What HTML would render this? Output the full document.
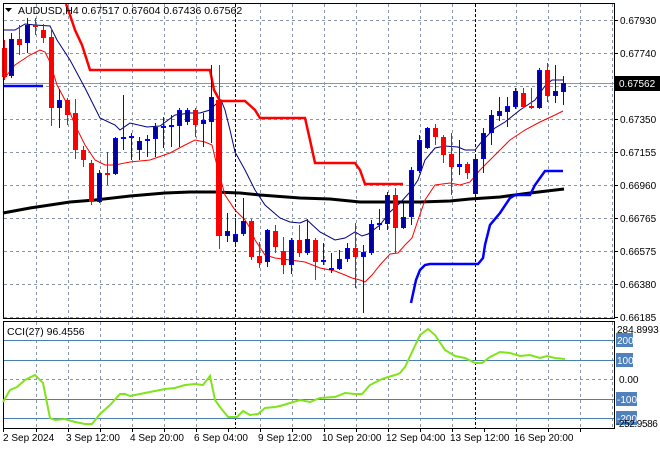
<!DOCTYPE html>
<html><head><meta charset="utf-8"><style>
html,body{margin:0;padding:0;background:#fff;}
svg{display:block;font-family:"Liberation Sans",sans-serif;}
</style></head><body>
<svg width="660" height="450" viewBox="0 0 660 450" xmlns="http://www.w3.org/2000/svg">
<rect width="660" height="450" fill="#fff"/>
<g stroke="#8a96a3" stroke-width="1" stroke-dasharray="3,3" shape-rendering="crispEdges">
<path d="M36.5 4V318M68.5 4V318M100.5 4V318M132.5 4V318M164.5 4V318M196.5 4V318M260.5 4V318M292.5 4V318M324.5 4V318M356.5 4V318M388.5 4V318M420.5 4V318M452.5 4V318M516.5 4V318M548.5 4V318M580.5 4V318M612.5 4V318"/>
<path d="M36.5 322V428M68.5 322V428M100.5 322V428M132.5 322V428M164.5 322V428M196.5 322V428M260.5 322V428M292.5 322V428M324.5 322V428M356.5 322V428M388.5 322V428M420.5 322V428M452.5 322V428M516.5 322V428M548.5 322V428M580.5 322V428M612.5 322V428"/>
<path d="M4 20.5H614M4 53.5H614M4 86.5H614M4 119.5H614M4 152.5H614M4 185.5H614M4 218.5H614M4 251.5H614M4 284.5H614M4 317.5H614M4 379.5H614"/>
</g>
<g stroke="#000" stroke-width="1" stroke-dasharray="3,2" shape-rendering="crispEdges">
<path d="M235.5 4V318M475.5 4V318M235.5 322V428M475.5 322V428"/>
</g>
<path d="M4 83.5H614" stroke="#8a96a3" stroke-width="1"/>
<polyline fill="none" stroke="#000" stroke-width="3" points="3,213 30,208 70,202 95,200 130,196 165,193 190,192 215,192 240,193 260,195 300,198 330,199 360,202 380,202 420,202 450,201 470,199 500,197 530,193 564,189"/>
<polyline fill="none" stroke="#f00" stroke-width="2.5" points="66,4 70,15 75,30 82,45 90,70 210,70 214,90 220,101 245,101 255,110 260,118 305,118 310,140 315,163 355,163 360,170 365,184 403,184"/>
<polyline fill="none" stroke="#00f" stroke-width="2.5" points="3,86 43,86"/>
<polyline fill="none" stroke="#00f" stroke-width="2.5" points="411,303 416,280 420,270 425,265 430,264 478,264 483,258 485,245 490,225 500,213 510,198 515,195 530,195 535,185 540,178 545,171 563,171"/>
<polyline fill="none" stroke="#000080" stroke-width="1" points="3,30 15,30 25,24 35,25 50,26 57,40 70,60 85,88 100,118 115,125 120,130 130,123 147,127 160,126 175,115 190,113 200,113 210,110 215,105 221,100 225,110 230,130 235,152 245,170 255,190 265,205 280,218 290,222 300,223 307,220 320,232 335,240 345,238 355,232 362,236 368,234 380,225 390,212 400,203 410,192 418,180 425,160 435,148 445,146 458,147 465,150 475,150 483,140 495,128 505,122 520,110 535,100 545,86 552,80 563,80"/>
<polyline fill="none" stroke="#f00" stroke-width="1" points="3,80 15,65 30,55 40,50 45,52 50,62 57,85 65,100 75,125 85,145 95,160 105,165 115,165 130,162 150,160 170,153 185,145 195,140 205,142 212,145 218,170 225,195 235,210 245,220 250,228 255,240 265,255 275,258 290,260 305,262 320,268 335,271 345,275 352,278 360,280 365,282 372,275 380,265 390,254 398,253 405,245 412,238 418,220 425,200 435,185 450,183 460,185 470,182 480,170 495,155 510,140 525,130 540,122 555,115 563,111"/>
<g shape-rendering="crispEdges">
<path stroke="#f00" stroke-width="1" fill="none" d="M4.5 40V80M19.5 25V55M35.5 18V35M43.5 24V43M51.5 28V126M67.5 98V125M75.5 99V159M83.5 146V167M91.5 160V205M107.5 152V185M195.5 108V137M219.5 65V249M251.5 219V260M259.5 242V268M275.5 225V253M283.5 237V274M299.5 225V257M315.5 238V280M355.5 223V288M395.5 188V253M435.5 124V145M443.5 135V163M451.5 133V195M467.5 162V179M523.5 88V108M531.5 88V109M547.5 63V102"/>
<path fill="#f00" d="M2 48h5v29h-5zM17 39h5v6h-5zM33 25h5v2h-5zM41 30h5v8h-5zM49 37h5v71h-5zM65 100h5v15h-5zM73 113h5v37h-5zM81 150h5v10h-5zM89 163h5v39h-5zM105 173h5v2h-5zM193 110h5v15h-5zM216 100h6v136h-6zM249 221h5v36h-5zM257 256h5v7h-5zM273 231h5v16h-5zM281 251h5v14h-5zM297 240h5v13h-5zM313 240h5v22h-5zM353 248h5v9h-5zM393 195h5v33h-5zM433 128h5v9h-5zM441 137h5v18h-5zM449 154h5v13h-5zM465 164h5v9h-5zM521 93h5v14h-5zM529 106h5v2h-5zM545 70h5v26h-5z"/>
<path stroke="#00f" stroke-width="1" fill="none" d="M11.5 33V78M27.5 18V53M59.5 89V128M99.5 170V203M115.5 137V175M123.5 95V150M131.5 133V160M139.5 137V160M147.5 135V157M155.5 123V157M163.5 117V148M171.5 115V147M179.5 108V147M187.5 108V125M203.5 113V147M211.5 65V143M227.5 213V242M235.5 218V245M243.5 198V236M267.5 229V267M291.5 238V274M307.5 219V255M323.5 243V265M331.5 253V273M339.5 250V270M347.5 243V262M363.5 245V313M371.5 220V255M379.5 209V230M387.5 192V230M403.5 203V229M411.5 167V225M419.5 135V173M427.5 127V149M459.5 140V175M475.5 157V195M483.5 128V173M491.5 110V145M499.5 97V121M507.5 97V127M515.5 88V109M539.5 68V109M555.5 65V103M563.5 76V105"/>
<path fill="#0000a0" stroke="#0000ff" stroke-width="1" d="M9.5 39.5h4v36h-4zM25.5 25.5h4v17h-4zM57.5 100.5h4v7h-4zM97.5 173.5h4v28h-4zM113.5 138.5h4v35h-4zM121.5 137.5h4v1h-4zM129.5 136.5h4v1h-4zM137.5 141.5h4v8h-4zM145.5 139.5h4v1h-4zM153.5 127.5h4v11h-4zM161.5 126.5h4v1h-4zM169.5 125.5h4v1h-4zM177.5 110.5h4v15h-4zM185.5 110.5h4v11h-4zM201.5 120.5h4v3h-4zM209.5 97.5h4v24h-4zM225.5 231.5h4v4h-4zM233.5 234.5h4v7h-4zM241.5 221.5h4v12h-4zM265.5 230.5h4v31h-4zM289.5 240.5h4v24h-4zM305.5 239.5h4v13h-4zM321.5 260.5h4v1h-4zM329.5 268.5h4v1h-4zM337.5 259.5h4v9h-4zM345.5 248.5h4v10h-4zM361.5 252.5h4v4h-4zM369.5 224.5h4v28h-4zM377.5 223.5h4v1h-4zM385.5 195.5h4v28h-4zM401.5 217.5h4v10h-4zM409.5 170.5h4v46h-4zM417.5 140.5h4v30h-4zM425.5 128.5h4v19h-4zM457.5 164.5h4v2h-4zM473.5 159.5h4v34h-4zM481.5 133.5h4v25h-4zM489.5 115.5h4v17h-4zM497.5 111.5h4v4h-4zM505.5 106.5h4v5h-4zM513.5 91.5h4v15h-4zM537.5 70.5h4v37h-4zM553.5 91.5h4v4h-4zM561.5 83.5h4v8h-4z"/>
</g>
<g stroke="#000" stroke-width="1" fill="none" shape-rendering="crispEdges">
<rect x="3.5" y="3.5" width="611" height="315"/>
<rect x="3.5" y="321.5" width="611" height="107"/>
</g>
<g stroke="#4a7fb0" stroke-width="1" shape-rendering="crispEdges">
<path d="M4 340.5H614M4 360.5H614M4 399.5H614M4 418.5H614"/>
</g>
<polyline fill="none" stroke="#7fe51a" stroke-width="2" points="3,402 10,390 17,387 25,380 35,375 43,383 50,418 55,420 65,419 75,422 85,424 92,424 100,414 110,405 120,394 125,394 130,396 150,392 165,389 175,388 185,385 195,384 203,385 210,376 215,400 220,407 228,417 237,417 243,411 250,415 258,414 265,408 275,407 280,406 290,403 300,400 310,402 320,398 335,397 345,393 355,394 362,394 370,385 380,380 385,378 395,375 400,373 405,367 413,350 420,335 428,329 435,335 445,350 455,356 465,358 475,363 482,363 490,357 500,352 510,353 520,356 530,355 540,358 547,356 555,358 565,359"/>
<path d="M5 8H12L8.5 12Z" fill="#000"/>
<text x="18" y="14" font-size="10.5" fill="#000">AUDUSD,H4 0.67517 0.67604 0.67436 0.67562</text>
<text x="7" y="335" font-size="10.5" fill="#000">CCI(27) 96.4556</text>
<g font-size="10" fill="#000">
<text x="620" y="24">0.67930</text>
<text x="620" y="57">0.67740</text>
<text x="620" y="123">0.67350</text>
<text x="620" y="156">0.67155</text>
<text x="620" y="189">0.66960</text>
<text x="620" y="222">0.66765</text>
<text x="620" y="255">0.66575</text>
<text x="620" y="288">0.66380</text>
<text x="620" y="321">0.66185</text>
<text x="617" y="333">284.8993</text>
<text x="619" y="383">0.00</text>
</g>
<path d="M614 20.5h4M614 53.5h4M614 119.5h4M614 152.5h4M614 185.5h4M614 218.5h4M614 251.5h4M614 284.5h4M614 317.5h4" stroke="#000"/>
<rect x="615" y="76" width="45" height="15" fill="#000"/>
<text x="619" y="87" font-size="10" fill="#fff">0.67562</text>
<g fill="#4f81bd">
<rect x="616" y="333" width="17" height="14"/>
<rect x="616" y="353" width="17" height="14"/>
<rect x="616" y="392" width="21" height="14"/>
<rect x="616" y="411" width="21" height="14"/>
</g>
<g font-size="10" fill="#fff">
<text x="617" y="344">200</text>
<text x="617" y="364">100</text>
<text x="617" y="403">-100</text>
<text x="617" y="422">-200</text>
</g>
<text x="616" y="427" font-size="10" fill="#000" letter-spacing="-0.4">-252.9586</text>
<g font-size="10" fill="#000">
<text x="3" y="441">2 Sep 2024</text>
<text x="66" y="441">3 Sep 12:00</text>
<text x="130" y="441">4 Sep 20:00</text>
<text x="194" y="441">6 Sep 04:00</text>
<text x="258" y="441">9 Sep 12:00</text>
<text x="322" y="441">10 Sep 20:00</text>
<text x="386" y="441">12 Sep 04:00</text>
<text x="450" y="441">13 Sep 12:00</text>
<text x="514" y="441">16 Sep 20:00</text>
</g>
<path d="M3.5 429v3M36.5 429v3M68.5 429v3M100.5 429v3M132.5 429v3M164.5 429v3M196.5 429v3M228.5 429v3M260.5 429v3M292.5 429v3M324.5 429v3M356.5 429v3M388.5 429v3M420.5 429v3M452.5 429v3M484.5 429v3M516.5 429v3M548.5 429v3M580.5 429v3" stroke="#000"/>
</svg>
</body></html>
